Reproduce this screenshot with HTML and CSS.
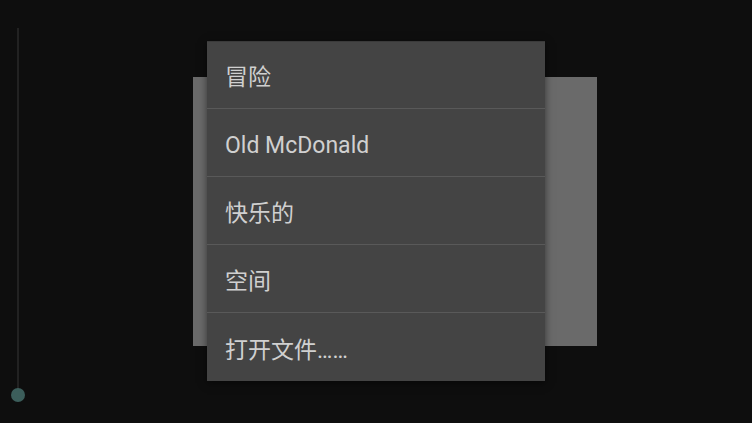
FILE: index.html
```html
<!DOCTYPE html>
<html>
<head>
<meta charset="utf-8">
<link rel="stylesheet" href="styles.css">
</head>
<body>
<div class="stage">
  <div class="slider">
    <div class="track"></div>
    <div class="thumb"></div>
  </div>
  <div class="panel"></div>
  <ul class="menu">
    <li class="item">冒险</li>
    <li class="item">Old McDonald</li>
    <li class="item">快乐的</li>
    <li class="item">空间</li>
    <li class="item">打开文件……</li>
  </ul>
</div>
</body>
</html>
```
FILE: styles.css
```css
html, body {
  margin: 0;
  padding: 0;
  background: #0e0e0e;
}
.stage {
  position: relative;
  width: 752px;
  height: 423px;
  overflow: hidden;
  font-family: Roboto, "Noto Sans CJK SC", sans-serif;
}
.slider {
  position: absolute;
  left: 11px;
  top: 28px;
  width: 14px;
  height: 374px;
}
.track {
  position: absolute;
  left: 6px;
  top: 0;
  width: 2px;
  height: 362px;
  background: #222222;
}
.thumb {
  position: absolute;
  left: 0;
  bottom: 0;
  width: 14px;
  height: 14px;
  border-radius: 50%;
  background: #3c5e5b;
}
.panel {
  position: absolute;
  left: 193px;
  top: 77px;
  width: 404px;
  height: 269px;
  background: #6a6a6a;
}
.menu {
  position: absolute;
  left: 207px;
  top: 41px;
  width: 338px;
  margin: 0;
  padding: 0;
  list-style: none;
  background: #444444;
  box-shadow: inset 0 1px 0 #3a3a3a, 0 2px 8px rgba(0, 0, 0, 0.5);
  display: flex;
  flex-direction: column;
}
.item {
  box-sizing: border-box;
  height: 68px;
  display: flex;
  align-items: center;
  padding: 6px 0 0 18px;
  font-size: 23px;
  line-height: 1;
  color: #d0d0d0;
  border-bottom: 1px solid #595959;
}
.item:last-child {
  border-bottom: none;
}
```
